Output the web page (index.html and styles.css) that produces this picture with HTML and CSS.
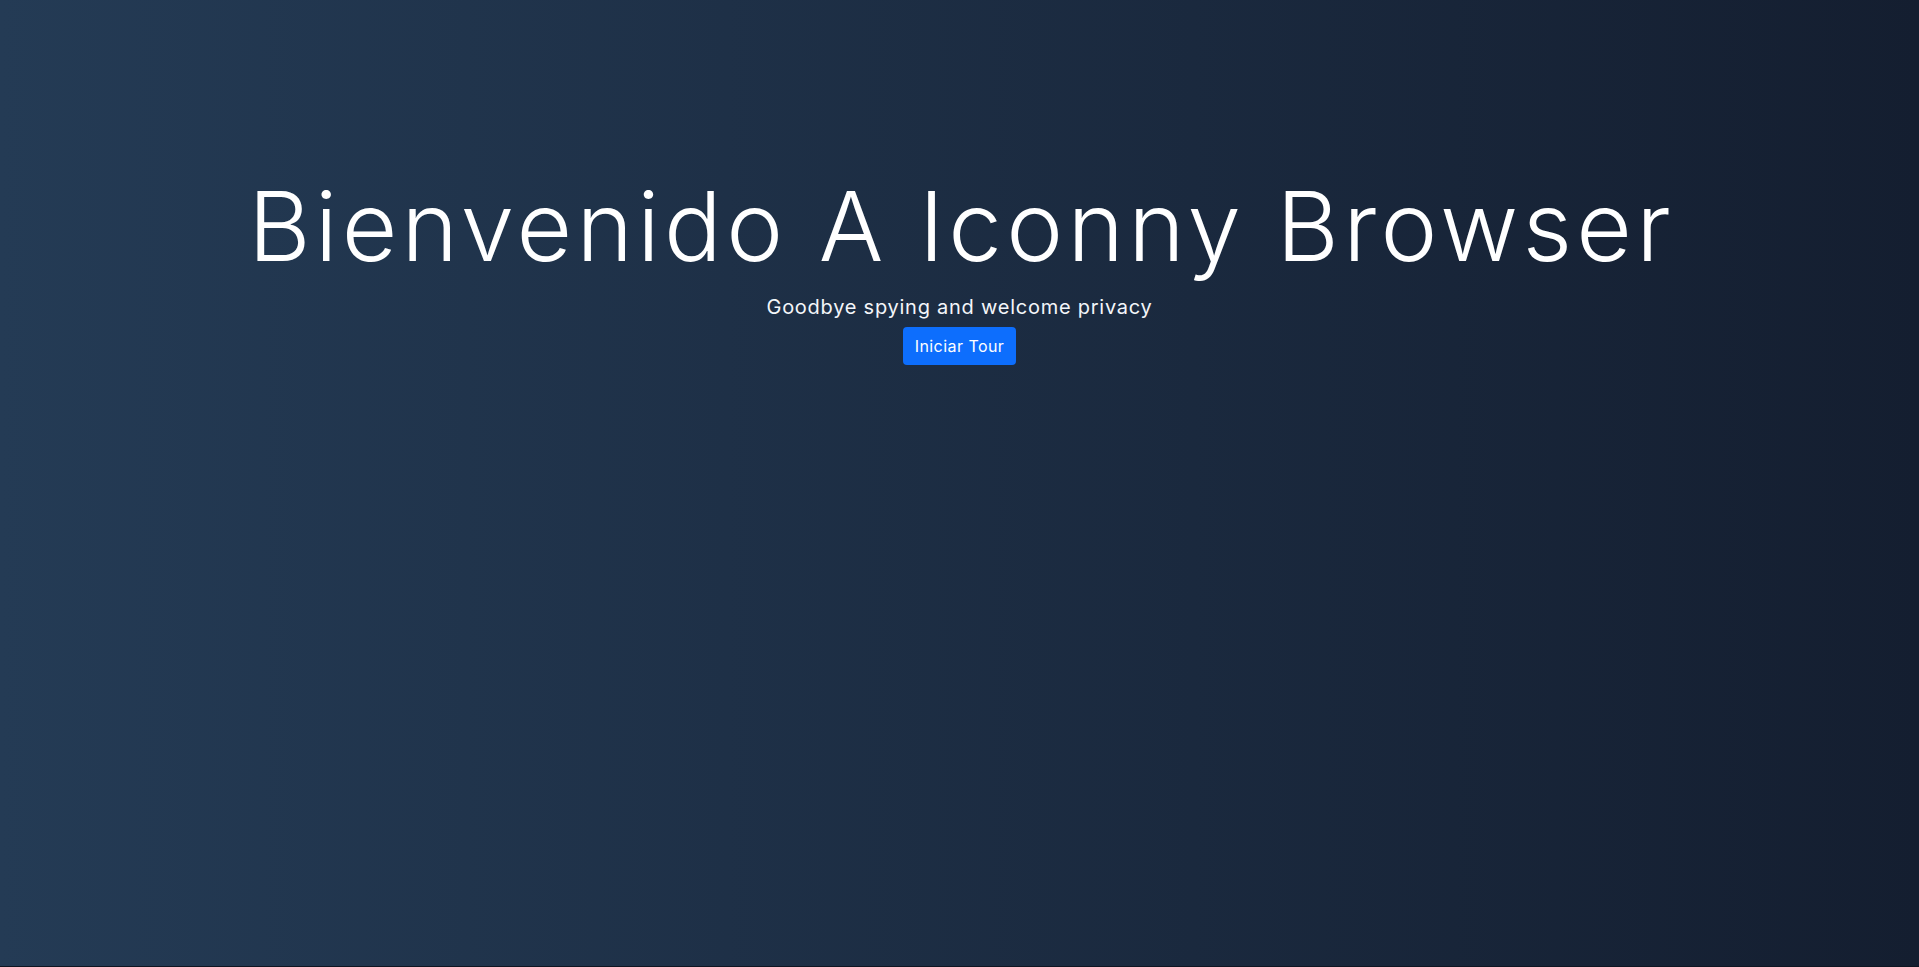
FILE: index.html
```html
<!DOCTYPE html>
<html lang="es">
<head>
<meta charset="utf-8">
<title>Iconny Browser</title>
<link rel="stylesheet" href="styles.css">
</head>
<body>
<main class="hero">
  <h1 class="hero-title">Bienvenido A Iconny Browser</h1>
  <p class="hero-lead">Goodbye spying and welcome privacy</p>
  <button class="btn-primary" type="button">Iniciar Tour</button>
</main>
</body>
</html>
```
FILE: styles.css
```css
html, body {
  margin: 0;
  padding: 0;
}
body {
  background: #0f1522;
  font-family: "Inter", "Noto Sans", sans-serif;
  color: #fff;
}
.hero {
  box-sizing: border-box;
  height: 966px;
  background: linear-gradient(to right, #243b55, #141e30);
  display: flex;
  flex-direction: column;
  align-items: center;
  padding-top: 169px;
  text-align: center;
}
.hero-title {
  margin: 0;
  font-size: 96px;
  font-weight: 300;
  line-height: 1.2;
  letter-spacing: 4.3px;
  text-indent: 4.3px;
}
.hero-lead {
  margin: 8px 0 0;
  font-size: 20px;
  line-height: 1.5;
  font-weight: 400;
  letter-spacing: 0.75px;
  color: #f4f6fa;
}
.btn-primary {
  margin-top: 5px;
  box-sizing: border-box;
  height: 38px;
  padding: 6px 12px;
  border: none;
  border-radius: 4px;
  background: #0d6efd;
  color: #fff;
  font-family: inherit;
  font-size: 16px;
  line-height: 24px;
  letter-spacing: 0.45px;
}
```
